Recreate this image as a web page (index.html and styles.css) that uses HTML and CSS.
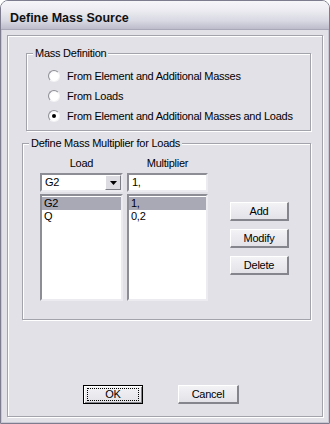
FILE: index.html
```html
<!DOCTYPE html>
<html>
<head>
<meta charset="utf-8">
<link rel="stylesheet" href="styles.css">
</head>
<body>
<div class="window">
  <div class="titlebar"><span class="title">Define Mass Source</span></div>
  <div class="client">
    <div class="frame">
      <fieldset class="group group-mass">
        <legend>Mass Definition</legend>
        <div class="radios">
          <div class="radio"><span class="dot"></span><span>From Element and Additional Masses</span></div>
          <div class="radio"><span class="dot"></span><span>From Loads</span></div>
          <div class="radio"><span class="dot on"></span><span>From Element and Additional Masses and Loads</span></div>
        </div>
      </fieldset>
      <fieldset class="group group-mult">
        <legend>Define Mass Multiplier for Loads</legend>
        <div class="mult">
          <div class="col col-load">
            <div class="colhead">Load</div>
            <div class="combo">
              <span class="val">G2</span>
              <span class="dd"><svg width="7" height="4" viewBox="0 0 7 4"><path d="M0 0H7L3.5 4Z" fill="#000"/></svg></span>
            </div>
            <div class="list">
              <div class="item sel">G2</div>
              <div class="item">Q</div>
            </div>
          </div>
          <div class="col col-mul">
            <div class="colhead">Multiplier</div>
            <div class="edit"><span class="val">1,</span></div>
            <div class="list">
              <div class="item sel">1,</div>
              <div class="item">0,2</div>
            </div>
          </div>
          <div class="btns">
            <div class="btn">Add</div>
            <div class="btn">Modify</div>
            <div class="btn">Delete</div>
          </div>
        </div>
      </fieldset>
      <div class="footer">
        <div class="btn btn-default"><span class="focus">OK</span></div>
        <div class="btn btn-cancel">Cancel</div>
      </div>
    </div>
  </div>
</div>
</body>
</html>
```

FILE: styles.css
```css
html, body {
  margin: 0;
  padding: 0;
  background: #ffffff;
}

.window {
  width: 330px;
  height: 424px;
  box-sizing: border-box;
  border: 1px solid #7c7c8e;
  border-radius: 8px 8px 0 0;
  overflow: hidden;
  display: flex;
  flex-direction: column;
  font-family: "Liberation Sans", Arial, sans-serif;
  font-size: 11px;
  letter-spacing: -0.25px;
  color: #000;
}

.titlebar {
  height: 29px;
  flex: none;
  box-sizing: border-box;
  padding: 10px 0 0 9px;
  background: linear-gradient(#f6f6f9 0%, #ebebf1 35%, #d9d9e3 70%, #bcbccb 100%);
  border-bottom: 1px solid #a8a8b8;
}

.title {
  font-size: 12.5px;
  font-weight: bold;
  letter-spacing: 0;
  line-height: 15px;
  color: #101010;
}

.client {
  flex: 1;
  display: flex;
  flex-direction: column;
  background: #e2e1e7;
  padding: 5px 6px 6px 6px;
  box-shadow: inset 1px 0 0 #c8c8d4, inset -1px 0 0 #c8c8d4, inset 0 -1px 0 #c8c8d4;
}

.frame {
  flex: 1;
  display: flex;
  flex-direction: column;
  border: 1px solid #a3a3ab;
  box-shadow: inset 1px 1px 0 #ffffff, 1px 1px 0 #ffffff;
}

.group {
  margin: 0;
  padding: 0;
  border: 1px solid #a3a3ab;
  box-shadow: inset 1px 1px 0 #ffffff, 1px 1px 0 #ffffff;
  min-width: 0;
}

.group legend {
  margin-left: 6px;
  padding: 0 2px;
  line-height: 13px;
  background: #e2e1e7;
}

.group-mass {
  margin: 11px 11px 0 18px;
}

.radios {
  padding: 6px 0 4px 21px;
  display: flex;
  flex-direction: column;
}

.radio {
  height: 20px;
  display: flex;
  align-items: center;
  gap: 7px;
  line-height: 13px;
}

.dot {
  width: 10px;
  height: 10px;
  border: 1px solid;
  border-color: #8e8e96 #f4f4f6 #f4f4f6 #8e8e96;
  border-radius: 50%;
  background: radial-gradient(circle at 60% 60%, #ffffff 50%, #e4e4ea 100%);
  position: relative;
  flex: none;
}

.dot.on::after {
  content: "";
  position: absolute;
  left: 3px;
  top: 3px;
  width: 4px;
  height: 4px;
  border-radius: 50%;
  background: #000;
}

.group-mult {
  margin: 6px 11px 0 14px;
}

.mult {
  display: flex;
  padding: 7px 0 18px 17px;
}

.col {
  display: flex;
  flex-direction: column;
}

.col-load {
  width: 83px;
}

.col-mul {
  width: 81px;
  margin-left: 4px;
}

.colhead {
  height: 13px;
  line-height: 13px;
  text-align: center;
  margin-bottom: 3px;
}

.combo, .edit {
  height: 19px;
  box-sizing: border-box;
  background: #fff;
  border: 2px solid;
  border-color: #8d8d95 #ececf0 #ececf0 #8d8d95;
  display: flex;
  align-items: center;
  padding-left: 3px;
  line-height: 13px;
}

.val {
  flex: 1;
}

.dd {
  width: 16px;
  height: 15px;
  box-sizing: border-box;
  background: #dcdce2;
  border: 1px solid;
  border-color: #ffffff #7e7e86 #7e7e86 #ffffff;
  display: flex;
  align-items: center;
  justify-content: center;
}

.list {
  margin-top: 2px;
  height: 107px;
  box-sizing: border-box;
  background: #fff;
  border: 2px solid;
  border-color: #8d8d95 #ececf0 #ececf0 #8d8d95;
  padding-top: 1px;
}

.item {
  height: 13px;
  line-height: 13px;
  padding-left: 2px;
}

.item.sel {
  background: #a9a9b6;
}

.btns {
  margin-left: 22px;
  margin-top: 45px;
  display: flex;
  flex-direction: column;
  gap: 8px;
}

.btn {
  width: 59px;
  height: 19px;
  box-sizing: border-box;
  background: linear-gradient(#f3f3f6, #e2e2e8);
  border-style: solid;
  border-width: 1px 2px 2px 1px;
  border-color: #ffffff #85858d #85858d #ffffff;
  display: flex;
  align-items: center;
  justify-content: center;
  line-height: 13px;
}

.footer {
  margin-top: auto;
  display: flex;
  padding: 0 0 12px 75px;
  gap: 35px;
}

.btn-default {
  width: 60px;
  border: 1px solid #000;
  box-shadow: inset 1px 1px 0 #ffffff, inset -1px -1px 0 #85858d;
}

.focus {
  box-sizing: border-box;
  width: 52px;
  height: 13px;
  border: 1px dotted #000;
  display: flex;
  align-items: center;
  justify-content: center;
}

.btn-cancel {
  width: 61px;
}
```
